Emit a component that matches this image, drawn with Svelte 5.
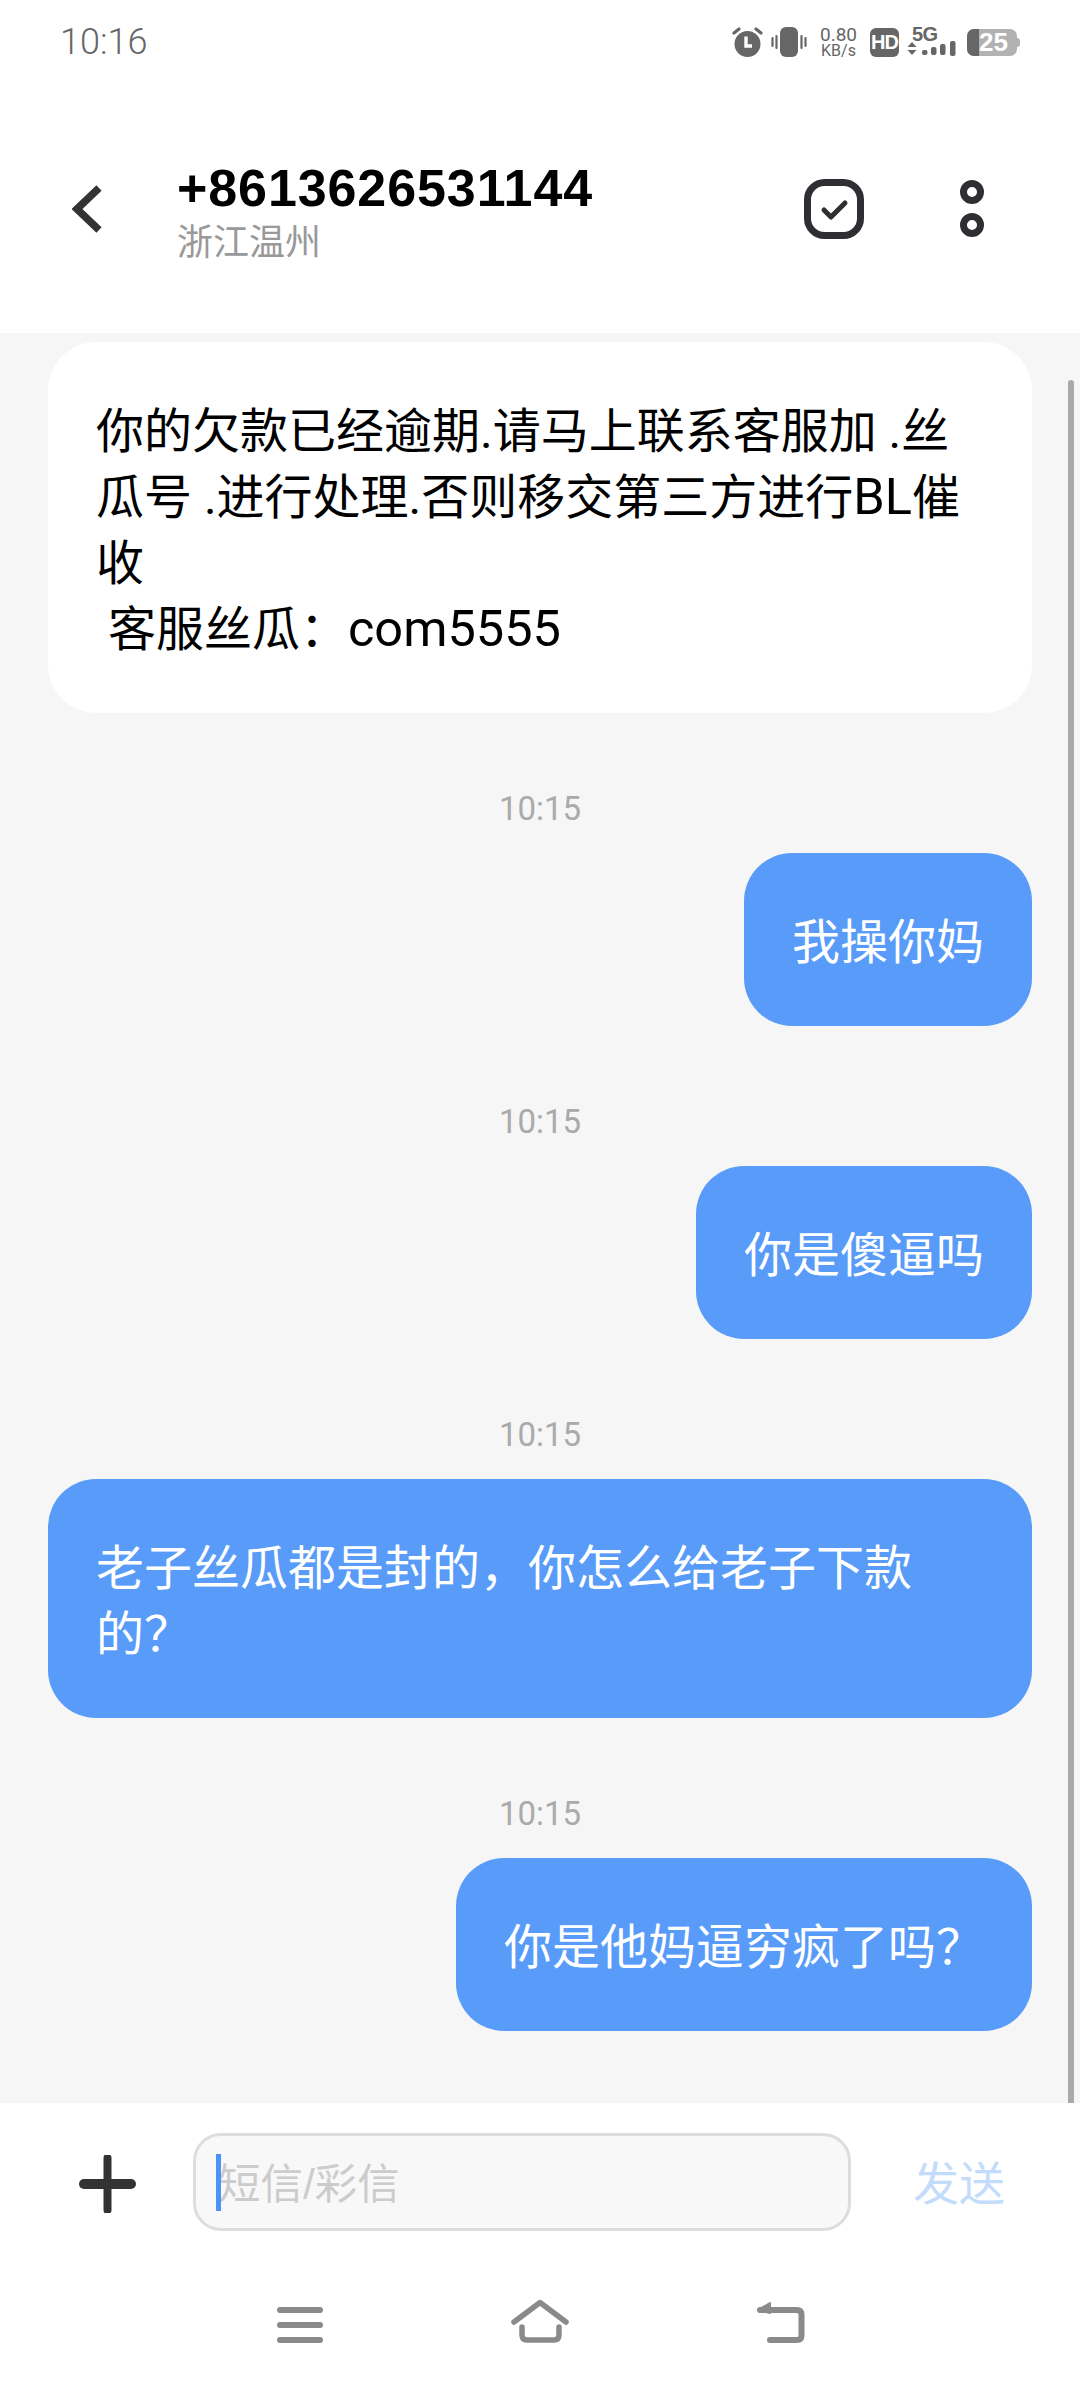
<script lang="ts">
  type Message = { time?: string; text: string; mine: boolean };

  const messages: Message[] = [
    {
      text: "你的欠款已经逾期.请马上联系客服加 .丝瓜号 .进行处理.否则移交第三方进行BL催收\n 客服丝瓜：com5555",
      mine: false
    },
    { time: "10:15", text: "我操你妈", mine: true },
    { time: "10:15", text: "你是傻逼吗", mine: true },
    { time: "10:15", text: "老子丝瓜都是封的，你怎么给老子下款的？", mine: true },
    { time: "10:15", text: "你是他妈逼穷疯了吗？", mine: true }
  ];

  const signalBars = [
    { x: 15, y: 23, h: 5 },
    { x: 24, y: 20, h: 8 },
    { x: 33, y: 17, h: 11 },
    { x: 43, y: 14, h: 15 }
  ];

  // latin runs sit in their own span, they are drawn a little larger than the CJK text
  function splitRuns(text: string): string[] {
    return text.split(/([A-Za-z0-9]+)/);
  }
</script>

<div class="phone">
  <div class="status-bar">
    <span class="clock">10:16</span>
    <div class="status-icons">
      <svg width="31" height="32" viewBox="0 0 31 32" aria-hidden="true">
        <circle cx="15.5" cy="18" r="13" fill="#666" />
        <path d="M14 10.5v9.5h6" fill="none" stroke="#fff" stroke-width="3.4" />
        <path d="M2 7l5-4M29 7l-5-4" fill="none" stroke="#666" stroke-width="3.2" stroke-linecap="round" />
      </svg>
      <svg width="36" height="30" viewBox="0 0 36 30" aria-hidden="true">
        <rect x="9" y="0" width="18" height="30" rx="6" fill="#666" />
        <path d="M1.5 11v8M5.5 9v12M30.5 9v12M34.5 11v8" stroke="#666" stroke-width="2.2" stroke-linecap="round" />
      </svg>
      <div class="speed">
        <span class="speed-value">0.80</span>
        <span class="speed-unit">KB/s</span>
      </div>
      <div class="hd">HD</div>
      <div class="network">
        <span class="network-label">5G</span>
        <svg width="52" height="30" viewBox="0 0 52 30" aria-hidden="true">
          <path d="M5 15l4.5 5h-9zM0.5 23h9l-4.500 5z" fill="#666" />
          {#each signalBars as bar}
            <rect x={bar.x} y={bar.y} width="5.5" height={bar.h} rx="2" fill="#666" />
          {/each}
        </svg>
      </div>
      <div class="battery">
        <div class="battery-used"></div>
        <span class="battery-level">25</span>
        <div class="battery-nub"></div>
      </div>
    </div>
  </div>

  <header class="top-bar">
    <svg class="back" width="30" height="48" viewBox="0 0 30 48" aria-hidden="true">
      <path d="M27 3L5 24l22 21" fill="none" stroke="#333" stroke-width="7.5" />
    </svg>
    <div class="title">
      <strong>+8613626531144</strong>
      <span>浙江温州</span>
    </div>
    <svg class="select" width="60" height="60" viewBox="0 0 60 60" aria-hidden="true">
      <rect x="3.5" y="3.5" width="53" height="53" rx="17" fill="none" stroke="#2f2f33" stroke-width="7" />
      <path d="M20 31l7 7 14-14" fill="none" stroke="#2f2f33" stroke-width="5" stroke-linecap="round" stroke-linejoin="round" />
    </svg>
    <svg class="more" width="24" height="57" viewBox="0 0 24 57" aria-hidden="true">
      <circle cx="12" cy="12" r="8.5" fill="none" stroke="#2f2f33" stroke-width="7" />
      <circle cx="12" cy="45" r="8.5" fill="none" stroke="#2f2f33" stroke-width="7" />
    </svg>
  </header>

  <main class="thread">
    {#each messages as message}
      {#if message.time}
        <div class="time">{message.time}</div>
      {/if}
      <div class="bubble" class:mine={message.mine}>
        {#each splitRuns(message.text) as run, i}{#if i % 2 === 1}<span class="latin">{run}</span>{:else}{run}{/if}{/each}
      </div>
    {/each}
    <div class="scrollbar"></div>
  </main>

  <div class="composer">
    <svg class="plus" width="57" height="58" viewBox="0 0 57 58" aria-hidden="true">
      <path d="M5 29h47" stroke="#333" stroke-width="10" stroke-linecap="round" />
      <path d="M28.5 3v52" stroke="#333" stroke-width="8" stroke-linecap="round" />
    </svg>
    <div class="input">
      <span class="caret"></span>
      <span class="placeholder">短信/彩信</span>
    </div>
    <span class="send">发送</span>
  </div>

  <nav class="nav-bar">
    <svg width="60" height="60" viewBox="0 0 60 60" aria-hidden="true">
      <path d="M10 15h40M10 30h40M10 45h40" stroke="#8a8a8a" stroke-width="6" stroke-linecap="round" />
    </svg>
    <svg width="60" height="60" viewBox="0 0 60 60" aria-hidden="true">
      <path d="M4 27L30 7.5 56 27" fill="none" stroke="#8a8a8a" stroke-width="5.5" stroke-linecap="round" stroke-linejoin="round" />
      <path d="M12 32v8q0 5 5 5h27q5 0 5-5v-8" fill="none" stroke="#8a8a8a" stroke-width="5.5" stroke-linecap="round" />
    </svg>
    <svg width="60" height="60" viewBox="0 0 60 60" aria-hidden="true">
      <path d="M10 15h37q4.5 0 4.5 4.5v21q0 4.5-4.5 4.5H20" fill="none" stroke="#8a8a8a" stroke-width="6" stroke-linecap="round" />
      <path d="M8 15l12-7v10z" fill="#8a8a8a" stroke="#8a8a8a" stroke-width="2" stroke-linejoin="round" />
    </svg>
  </nav>
</div>

<style>
  :global(body) {
    margin: 0;
    background: #fff;
  }

  .phone {
    width: 1080px;
    height: 2388px;
    display: flex;
    flex-direction: column;
    overflow: hidden;
    background: #fff;
    font-family: "Liberation Sans", "Noto Sans CJK SC", sans-serif;
  }

  .status-bar {
    height: 84px;
    flex: none;
    display: flex;
    justify-content: space-between;
    align-items: center;
    padding: 0 60px;
    box-sizing: border-box;
    color: #666;
  }

  .clock {
    font-family: Roboto, sans-serif;
    font-size: 36px;
    font-weight: 300;
  }

  .status-icons {
    display: flex;
    align-items: center;
    gap: 8px;
  }

  .speed {
    width: 47px;
    display: flex;
    flex-direction: column;
    align-items: center;
    font-family: Roboto, sans-serif;
  }

  .speed-value {
    font-size: 19px;
    line-height: 17px;
  }

  .speed-unit {
    font-size: 16px;
    line-height: 15px;
  }

  .hd {
    width: 29px;
    height: 29px;
    border-radius: 6px;
    background: #666;
    color: #fff;
    font-size: 20px;
    font-weight: 700;
    line-height: 29px;
    text-align: center;
    letter-spacing: -1px;
  }

  .network {
    position: relative;
    width: 52px;
    height: 30px;
  }

  .network-label {
    position: absolute;
    left: 5px;
    top: -3px;
    font-size: 20px;
    line-height: 20px;
    font-weight: 700;
    letter-spacing: -0.5px;
    color: #666;
  }

  .battery {
    position: relative;
    width: 50px;
    height: 27px;
    margin-right: 3px;
    border-radius: 7px;
    background: #b2b2b2;
  }

  .battery-used {
    width: 12px;
    height: 27px;
    border-radius: 7px 0 0 7px;
    background: #666;
  }

  .battery-level {
    position: absolute;
    left: 12px;
    top: 0;
    color: #fff;
    font-size: 26px;
    line-height: 27px;
    font-weight: 700;
  }

  .battery-nub {
    position: absolute;
    right: -3px;
    top: 9px;
    width: 3px;
    height: 9px;
    border-radius: 0 3px 3px 0;
    background: #b2b2b2;
  }

  .top-bar {
    height: 249px;
    flex: none;
    display: flex;
    align-items: center;
    padding-left: 72px;
    box-sizing: border-box;
  }

  .back {
    margin-right: 75px;
  }

  .title {
    width: 627px;
    display: flex;
    flex-direction: column;
    padding-top: 7px;
  }

  .title strong {
    margin-bottom: 4px;
    color: #000;
    font-size: 52px;
    line-height: 58px;
    letter-spacing: 0.9px;
  }

  .title span {
    color: #999;
    font-size: 36px;
    line-height: 44px;
  }

  .more {
    margin-left: 96px;
  }

  .thread {
    position: relative;
    flex: 1;
    min-height: 0;
    display: flex;
    flex-direction: column;
    padding: 9px 48px 0;
    box-sizing: border-box;
    background: #f6f6f6;
    overflow: hidden;
  }

  .time {
    height: 140px;
    flex: none;
    display: flex;
    justify-content: center;
    align-items: flex-end;
    padding-bottom: 24px;
    box-sizing: border-box;
    color: #aaa;
    font-family: Roboto, sans-serif;
    font-size: 33px;
    line-height: 40px;
  }

  .bubble {
    flex: none;
    align-self: flex-start;
    max-width: 984px;
    padding: 57px 48px 50px;
    box-sizing: border-box;
    border-radius: 48px;
    background: #fff;
    color: #000;
    font-size: 48px;
    line-height: 66px;
    white-space: pre-wrap;
    font-family: Roboto, "Noto Sans CJK SC", sans-serif;
  }

  .bubble.mine {
    align-self: flex-end;
    background: #589bf9;
    color: #fff;
  }

  .latin {
    font-size: 50.5px;
    line-height: 1;
  }

  .scrollbar {
    position: absolute;
    right: 6px;
    top: 47px;
    bottom: 0;
    width: 6px;
    border-radius: 3px 3px 0 0;
    background: #aaa;
  }

  .composer {
    height: 159px;
    flex: none;
    display: flex;
    align-items: flex-start;
    padding: 30px 0 0 79px;
    box-sizing: border-box;
  }

  .plus {
    margin: 22px 57px 0 0;
  }

  .input {
    position: relative;
    width: 658px;
    height: 98px;
    box-sizing: border-box;
    border: 3px solid #ddd;
    border-radius: 28px;
    background: #f8f8f8;
    padding-left: 22px;
    color: #ccc;
    font-size: 42.5px;
    line-height: 97px;
  }

  .caret {
    position: absolute;
    left: 20px;
    top: 18px;
    width: 5px;
    height: 57px;
    background: #4a93f8;
  }

  .send {
    margin: 18px 0 0 62px;
    color: #c3dcfb;
    font-size: 46px;
    line-height: 66px;
  }

  .nav-bar {
    height: 126px;
    flex: none;
    display: flex;
    justify-content: center;
    align-items: center;
    gap: 180px;
  }
</style>
